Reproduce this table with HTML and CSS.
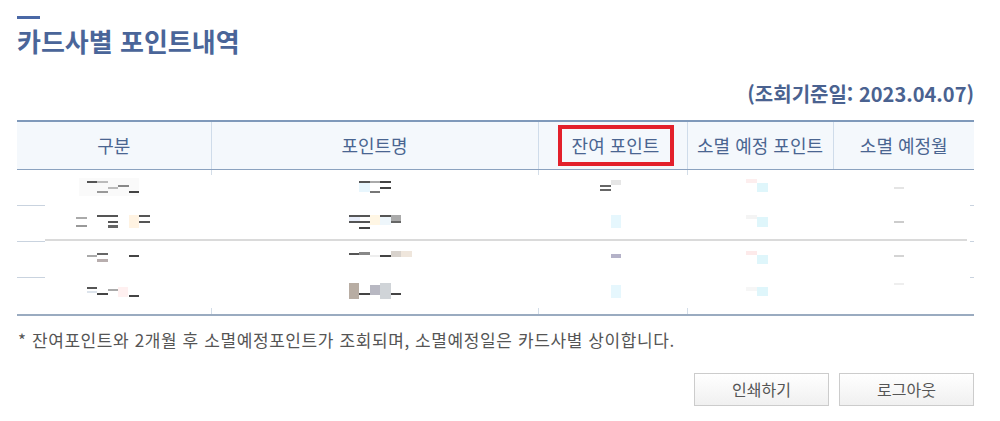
FILE: index.html
```html
<!DOCTYPE html>
<html lang="ko">
<head>
<meta charset="utf-8">
<title>카드사별 포인트내역</title>
<link rel="stylesheet" href="styles.css">
</head>
<body>
<div class="page">
  <div class="title-bar"></div>
  <h2 class="title">카드사별 포인트내역</h2>
  <p class="basis">(조회기준일: 2023.04.07)</p>
  <table class="points">
    <colgroup>
      <col class="c1"><col class="c2"><col class="c3"><col class="c4"><col class="c5">
    </colgroup>
    <thead>
      <tr>
        <th>구분</th>
        <th>포인트명</th>
        <th><span class="mark">잔여 포인트</span></th>
        <th>소멸 예정 포인트</th>
        <th>소멸 예정월</th>
      </tr>
    </thead>
    <tbody>
      <tr>
        <td><svg class="blur" width="194" height="36" viewBox="0 0 194 36"><rect x="62" y="8" width="60" height="18" fill="#fafafa"/><rect x="70" y="11" width="10" height="2" fill="#555"/><rect x="80" y="11" width="11" height="2" fill="#bbb"/><rect x="80" y="21" width="11" height="2" fill="#999"/><rect x="91" y="17" width="10" height="2" fill="#bbb"/><rect x="101" y="15" width="11" height="2" fill="#888"/><rect x="112" y="21" width="10" height="2" fill="#444"/></svg></td>
        <td><svg class="blur" width="327" height="36" viewBox="0 0 327 36"><rect x="148" y="13" width="11" height="9" fill="#e8f6fd"/><rect x="148" y="11" width="11" height="2" fill="#555"/><rect x="159" y="11" width="10" height="2" fill="#aaa"/><rect x="169" y="11" width="11" height="2" fill="#444"/><rect x="169" y="17" width="11" height="2" fill="#444"/><rect x="159" y="21" width="10" height="2" fill="#777"/></svg></td>
        <td><svg class="blur" width="149" height="36" viewBox="0 0 149 36"><rect x="62" y="15" width="11" height="2" fill="#666"/><rect x="62" y="19" width="11" height="2" fill="#666"/><rect x="73" y="10" width="10" height="5" fill="#e6e6e6"/></svg></td>
        <td><svg class="blur" width="146" height="36" viewBox="0 0 146 36"><rect x="59" y="9" width="11" height="4" fill="#fdeeee"/><rect x="70" y="13" width="11" height="9" fill="#dff6fb"/></svg></td>
        <td><svg class="blur" width="141" height="36" viewBox="0 0 141 36"><rect x="61" y="17" width="10" height="2" fill="#e4e4e4"/></svg></td>
      </tr>
      <tr>
        <td><svg class="blur" width="194" height="36" viewBox="0 0 194 36"><rect x="59" y="11" width="11" height="2" fill="#aaa"/><rect x="59" y="19" width="11" height="2" fill="#999"/><rect x="80" y="9" width="21" height="2" fill="#555"/><rect x="91" y="15" width="10" height="2" fill="#555"/><rect x="91" y="19" width="10" height="3" fill="#666"/><rect x="112" y="9" width="10" height="13" fill="#fff3e2"/><rect x="122" y="9" width="11" height="2" fill="#555"/><rect x="122" y="15" width="11" height="2" fill="#555"/></svg></td>
        <td><svg class="blur" width="327" height="36" viewBox="0 0 327 36"><rect x="138" y="9" width="11" height="7" fill="#e9eefa"/><rect x="138" y="9" width="21" height="2" fill="#555"/><rect x="138" y="15" width="21" height="2" fill="#555"/><rect x="148" y="21" width="11" height="2" fill="#444"/><rect x="159" y="9" width="10" height="10" fill="#fff6e4"/><rect x="169" y="9" width="11" height="10" fill="#eef6fb"/><rect x="169" y="9" width="11" height="2" fill="#555"/><rect x="180" y="9" width="10" height="6" fill="#aaa"/><rect x="180" y="15" width="10" height="2" fill="#666"/></svg></td>
        <td><svg class="blur" width="149" height="36" viewBox="0 0 149 36"><rect x="73" y="9" width="10" height="13" fill="#e6f7fd"/></svg></td>
        <td><svg class="blur" width="146" height="36" viewBox="0 0 146 36"><rect x="59" y="9" width="11" height="4" fill="#f4f4f4"/><rect x="70" y="11" width="11" height="10" fill="#dff6fb"/></svg></td>
        <td><svg class="blur" width="141" height="36" viewBox="0 0 141 36"><rect x="61" y="15" width="10" height="2" fill="#cccccc"/></svg></td>
      </tr>
      <tr>
        <td><svg class="blur" width="194" height="36" viewBox="0 0 194 36"><rect x="70" y="13" width="10" height="2" fill="#aaa"/><rect x="80" y="11" width="11" height="2" fill="#666"/><rect x="80" y="17" width="11" height="3" fill="#b8aeae"/><rect x="112" y="13" width="10" height="2" fill="#444"/></svg></td>
        <td><svg class="blur" width="327" height="36" viewBox="0 0 327 36"><rect x="138" y="11" width="10" height="2" fill="#555"/><rect x="148" y="10" width="11" height="3" fill="#888"/><rect x="159" y="13" width="10" height="2" fill="#eee"/><rect x="169" y="13" width="11" height="2" fill="#444"/><rect x="180" y="9" width="10" height="6" fill="#d8d2cc"/><rect x="190" y="9" width="11" height="6" fill="#efe6dc"/></svg></td>
        <td><svg class="blur" width="149" height="36" viewBox="0 0 149 36"><rect x="73" y="12" width="10" height="4" fill="#b4b2c8"/></svg></td>
        <td><svg class="blur" width="146" height="36" viewBox="0 0 146 36"><rect x="59" y="9" width="11" height="4" fill="#fdeaea"/><rect x="70" y="13" width="11" height="9" fill="#dff6fb"/></svg></td>
        <td><svg class="blur" width="141" height="36" viewBox="0 0 141 36"><rect x="61" y="13" width="10" height="2" fill="#d4d4d4"/></svg></td>
      </tr>
      <tr>
        <td><svg class="blur" width="194" height="36" viewBox="0 0 194 36"><rect x="70" y="9" width="10" height="2" fill="#555"/><rect x="70" y="13" width="10" height="2" fill="#dde4ec"/><rect x="80" y="15" width="11" height="2" fill="#444"/><rect x="91" y="11" width="10" height="2" fill="#aaa"/><rect x="101" y="9" width="10" height="10" fill="#fff0f0"/><rect x="112" y="17" width="10" height="2" fill="#444"/></svg></td>
        <td><svg class="blur" width="327" height="36" viewBox="0 0 327 36"><rect x="138" y="5" width="10" height="16" fill="#b8ada3"/><rect x="148" y="15" width="11" height="2" fill="#444"/><rect x="159" y="7" width="10" height="10" fill="#b8b8c2"/><rect x="169" y="5" width="11" height="16" fill="#d0d4d8"/><rect x="180" y="15" width="10" height="2" fill="#444"/></svg></td>
        <td><svg class="blur" width="149" height="36" viewBox="0 0 149 36"><rect x="73" y="7" width="10" height="13" fill="#e6f7fd"/></svg></td>
        <td><svg class="blur" width="146" height="36" viewBox="0 0 146 36"><rect x="59" y="9" width="11" height="4" fill="#f6f6f6"/><rect x="70" y="9" width="11" height="9" fill="#dff6fb"/></svg></td>
        <td><svg class="blur" width="141" height="36" viewBox="0 0 141 36"><rect x="61" y="5" width="10" height="2" fill="#eeeeee"/></svg></td>
      </tr>
    </tbody>
  </table>
  <p class="note">* 잔여포인트와 2개월 후 소멸예정포인트가 조회되며, 소멸예정일은 카드사별 상이합니다.</p>
  <div class="actions">
    <button type="button" class="btn">인쇄하기</button>
    <button type="button" class="btn">로그아웃</button>
  </div>
</div>
</body>
</html>
```

FILE: styles.css
```css
* { box-sizing: border-box; }

html, body {
  margin: 0;
  padding: 0;
  background: #ffffff;
}

body {
  font-family: "Noto Sans CJK KR", "Noto Sans", sans-serif;
  color: #555555;
}

.page {
  width: 957px;
  margin-left: 17px;
  padding-top: 16px;
}

.title-bar {
  width: 23px;
  height: 3px;
  background: #4a68a6;
}

.title {
  margin: 4px 0 0 0;
  font-size: 26px;
  line-height: 36px;
  font-weight: 700;
  color: #4a6599;
}

.basis {
  margin: 22px 0 0 0;
  text-align: right;
  font-size: 20px;
  line-height: 26px;
  font-weight: 700;
  color: #4a6290;
}

.points {
  margin-top: 13px;
  width: 957px;
  table-layout: fixed;
  border-collapse: collapse;
  border-top: 2px solid #7f99ba;
  border-bottom: 2px solid #9aabc0;
}

.c1 { width: 194px; }
.c2 { width: 327px; }
.c3 { width: 149px; }
.c4 { width: 146px; }
.c5 { width: 141px; }

.points th {
  height: 48px;
  padding: 0;
  background: #f4f8fc;
  border-bottom: 1px solid #8ba2bf;
  border-left: 1px solid #cfdcea;
  font-size: 18px;
  font-weight: 400;
  color: #4a6591;
  text-align: center;
  vertical-align: middle;
}

.points th:first-child { border-left: 0; }

.mark {
  display: inline-block;
  width: 116px;
  height: 41px;
  line-height: 33px;
  border: 4px solid #e3202b;
  margin-left: 6px;
}

.points td {
  height: 36px;
  padding: 0;
  vertical-align: top;
  background-repeat: no-repeat;
}

.blur { display: block; }

/* short separator stubs at the left edge */
.points tbody tr:nth-child(-n+3) td:first-child {
  background-image: linear-gradient(#c9d3df, #c9d3df);
  background-size: 28px 1px;
  background-position: left bottom;
}

.points tbody tr:nth-child(2) td {
  background-image: linear-gradient(#dadada, #dadada);
  background-size: 100% 2px;
  background-position: 0 33px;
}

.points tbody tr:nth-child(2) td:first-child {
  background-image: linear-gradient(#dadada, #dadada), linear-gradient(#c9d3df, #c9d3df);
  background-size: 166px 2px, 28px 1px;
  background-position: 28px 33px, left bottom;
}

.points tbody tr:nth-child(2) td:last-child {
  background-image: linear-gradient(#dadada, #dadada), linear-gradient(#c9d3df, #c9d3df);
  background-size: 134px 2px, 4px 1px;
  background-position: 0 33px, right bottom;
}

.points tbody tr:nth-child(1) td:last-child,
.points tbody tr:nth-child(3) td:last-child {
  background-image: linear-gradient(#c9d3df, #c9d3df);
  background-size: 4px 1px;
  background-position: right bottom;
}

/* faint column stubs at the top and bottom of the body */
.points tbody tr:first-child td:nth-child(2),
.points tbody tr:first-child td:nth-child(3),
.points tbody tr:first-child td:nth-child(4) {
  background-image: linear-gradient(#d3dde8, #d3dde8);
  background-size: 1px 5px;
  background-position: left top;
}

.points tbody tr:last-child td:nth-child(2),
.points tbody tr:last-child td:nth-child(3),
.points tbody tr:last-child td:nth-child(4) {
  background-image: linear-gradient(#d3dde8, #d3dde8);
  background-size: 1px 6px;
  background-position: left bottom;
}

.note {
  margin: 13px 0 0 1px;
  font-size: 17px;
  line-height: 22px;
  color: #555555;
  letter-spacing: 0.6px;
}

.actions {
  display: flex;
  justify-content: flex-end;
  gap: 10px;
  margin-top: 22px;
}

.btn {
  width: 135px;
  height: 33px;
  padding: 0;
  border: 1px solid #cccccc;
  background: linear-gradient(#ffffff, #f0f0f0);
  font-family: "Noto Sans CJK KR", "Noto Sans", sans-serif;
  font-size: 16px;
  color: #555555;
  cursor: pointer;
}
```
